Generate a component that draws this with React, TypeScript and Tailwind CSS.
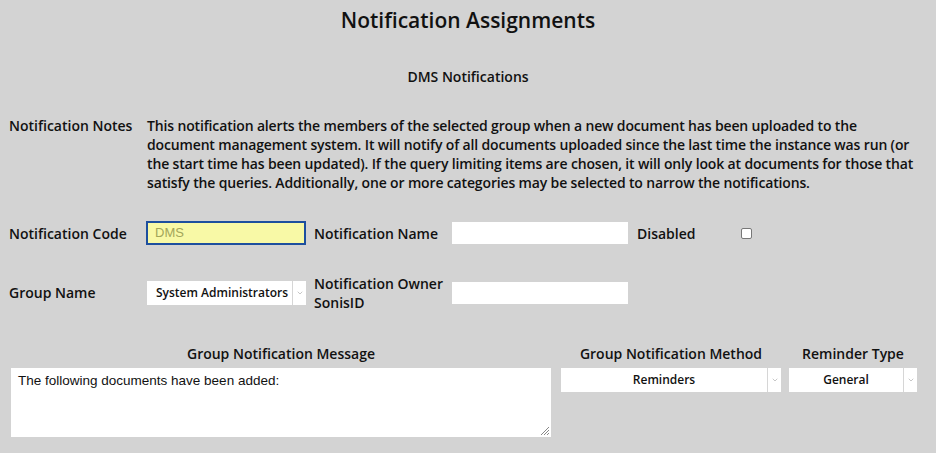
import { ChevronDown } from "lucide-react";

const font = "font-['Open_Sans','Noto_Sans',sans-serif]";

const notesLines = [
  "This notification alerts the members of the selected group when a new document has been uploaded to the",
  "document management system. It will notify of all documents uploaded since the last time the instance was run (or",
  "the start time has been updated). If the query limiting items are chosen, it will only look at documents for those that",
  "satisfy the queries. Additionally, one or more categories may be selected to narrow the notifications.",
];

const SelectBox = ({
  value,
  width,
  center,
}: {
  value: string;
  width: string;
  center?: boolean;
}) => (
  <div className={`flex h-[24px] bg-white ${width}`}>
    <div
      className={`flex flex-1 items-center text-[12px] font-semibold text-[#111] ${
        center ? "justify-center" : "pl-[9px]"
      }`}
    >
      {value}
    </div>
    <div className="flex w-[14px] items-center justify-center border-l border-[#d6d6d6]">
      <ChevronDown className="h-[8px] w-[8px] text-[#aaa]" strokeWidth={2} />
    </div>
  </div>
);

export default function App() {
  return (
    <div className={`min-h-[453px] w-full bg-[#d3d3d3] text-[#111] ${font}`}>
      {/* Title */}
      <h1 className="pt-[6px] text-center text-[21px] font-semibold leading-[28px]">
        Notification Assignments
      </h1>
      <h2 className="mt-[33px] text-center text-[14px] font-semibold leading-[19px]">
        DMS Notifications
      </h2>

      {/* Notes */}
      <div className="mt-[30px] flex pl-[9px] text-[14px] font-semibold leading-[19px]">
        <div className="w-[138px] shrink-0">Notification Notes</div>
        <p className="flex-1 tracking-[-0.15px]">
          {notesLines.map((line) => (
            <span key={line} className="block whitespace-nowrap">
              {line}
            </span>
          ))}
        </p>
      </div>

      {/* Code / Name / Disabled */}
      <div className="mt-[29px] flex items-center pl-[9px] text-[14px] font-semibold">
        <div className="w-[137px] shrink-0">Notification Code</div>
        <div className="flex h-[24px] w-[160px] items-center border-2 border-[#1d4f9e] bg-[#f8f9a6] pl-[7px] font-['Liberation_Sans',sans-serif] text-[13px] font-normal text-[#a3a65a]">
          DMS
        </div>
        <div className="ml-[8px] w-[138px] shrink-0">Notification Name</div>
        <div className="h-[22px] w-[176px] bg-white" />
        <div className="ml-[9px] w-[104px] shrink-0">Disabled</div>
        <div className="h-[11px] w-[11px] rounded-[2px] border border-[#777] bg-white" />
      </div>

      {/* Group / Owner */}
      <div className="mt-[28px] flex items-center pl-[9px] text-[14px] font-semibold">
        <div className="w-[138px] shrink-0">Group Name</div>
        <SelectBox value="System Administrators" width="w-[159px]" />
        <div className="ml-[8px] w-[138px] shrink-0 pt-[1px] leading-[19px]">
          Notification Owner
          <br />
          SonisID
        </div>
        <div className="h-[22px] w-[176px] bg-white" />
      </div>

      {/* Message / Method / Type */}
      <div className="mt-[32px] flex pl-[11px] text-[14px] font-semibold">
        <div className="flex w-[540px] flex-col items-center">
          <div className="leading-[19px]">Group Notification Message</div>
          <div className="relative mt-[5px] h-[69px] w-full bg-white px-[7px] pt-[3px] font-['Liberation_Sans',sans-serif] text-[13.5px] font-normal text-[#111]">
            The following documents have been added:
            <svg
              className="absolute bottom-[1px] right-[1px]"
              width="11"
              height="11"
              viewBox="0 0 11 11"
            >
              <path d="M10 2 L2 10 M10 5 L5 10 M10 8 L8 10" stroke="#888" strokeWidth="1" />
            </svg>
          </div>
        </div>
        <div className="ml-[10px] flex w-[220px] flex-col items-center">
          <div className="leading-[19px]">Group Notification Method</div>
          <div className="mt-[5px]">
            <SelectBox value="Reminders" width="w-[220px]" center />
          </div>
        </div>
        <div className="ml-[8px] flex w-[128px] flex-col items-center">
          <div className="leading-[19px]">Reminder Type</div>
          <div className="mt-[5px]">
            <SelectBox value="General" width="w-[128px]" center />
          </div>
        </div>
      </div>
    </div>
  );
}
